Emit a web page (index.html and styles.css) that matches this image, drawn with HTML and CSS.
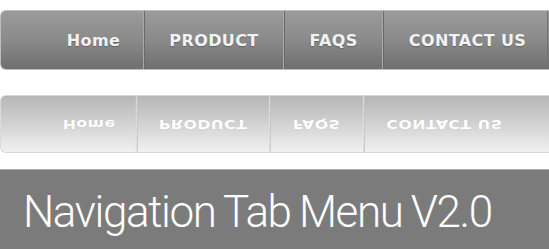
FILE: index.html
```html
<!DOCTYPE html>
<html>
<head>
<meta charset="utf-8">
<link rel="stylesheet" href="styles.css">
</head>
<body>
<div class="page">
  <ul class="nav">
    <li class="tab tab-home"><span>Home</span></li>
    <li class="tab tab-product"><span>PRODUCT</span></li>
    <li class="tab tab-faqs"><span>FAQS</span></li>
    <li class="tab tab-contact"><span>CONTACT US</span></li>
  </ul>
  <ul class="nav mirror">
    <li class="tab tab-home"><span>Home</span></li>
    <li class="tab tab-product"><span>PRODUCT</span></li>
    <li class="tab tab-faqs"><span>FAQS</span></li>
    <li class="tab tab-contact"><span>CONTACT US</span></li>
  </ul>
  <div class="banner">Navigation Tab Menu V2.0</div>
</div>
</body>
</html>
```
FILE: styles.css
```css
html, body {
  margin: 0;
  padding: 0;
  background: #ffffff;
}
.page {
  width: 549px;
  height: 249px;
  overflow: hidden;
}
.nav {
  list-style: none;
  margin: 10px 0 0 0;
  padding: 0;
  display: flex;
  height: 58px;
  width: 560px;
  border: 1px solid #bdbdbd;
  border-right: none;
  border-radius: 6px 0 0 6px;
  background: linear-gradient(to bottom, #9b9b9b 0%, #8a8a8a 50%, #6f6f6f 100%);
}
.tab {
  display: flex;
  align-items: center;
  justify-content: center;
  box-sizing: border-box;
  height: 100%;
  border-left: 1px solid #6a6a6a;
  border-right: 1px solid #a9a9a9;
  font-family: "DejaVu Sans", Verdana, sans-serif;
  font-weight: bold;
  font-size: 16px;
  letter-spacing: 0.4px;
  color: #f2f2f2;
  text-shadow: 0 1px 1px rgba(0, 0, 0, 0.25);
}
.tab-home {
  width: 143px;
  border-left: none;
  padding-left: 43px;
}
.tab-product { width: 140px; }
.tab-faqs { width: 99px; }
.tab-contact {
  width: 165px;
  padding-left: 4px;
  border-right-color: #727272;
}
.mirror {
  margin-top: 25px;
  height: 56px;
  width: 600px;
  transform: scaleX(0.95);
  transform-origin: left center;
  border-color: #d9d9d9;
  background: linear-gradient(to bottom, #b6b6b6 0%, #d2d2d2 50%, #f1f1f1 100%);
}
.mirror .tab {
  border-left-color: #c4c4c4;
  border-right-color: #e4e4e4;
  color: #ffffff;
  text-shadow: 0 0 1px rgba(0, 0, 0, 0.15);
}
.mirror .tab-contact {
  border-right: none;
}
.mirror .tab span {
  display: inline-block;
  transform: scale(1.04, -0.75);
}
.banner {
  margin-top: 16px;
  height: 80px;
  box-sizing: border-box;
  border-top: 1px solid #b0b0b0;
  background: #7b7b7b;
  color: #ffffff;
  font-family: Roboto, Lato, sans-serif;
  font-weight: 300;
  font-size: 44px;
  letter-spacing: -1.4px;
  word-spacing: -1px;
  line-height: 84px;
  padding-left: 23px;
  white-space: nowrap;
  overflow: hidden;
}
```
